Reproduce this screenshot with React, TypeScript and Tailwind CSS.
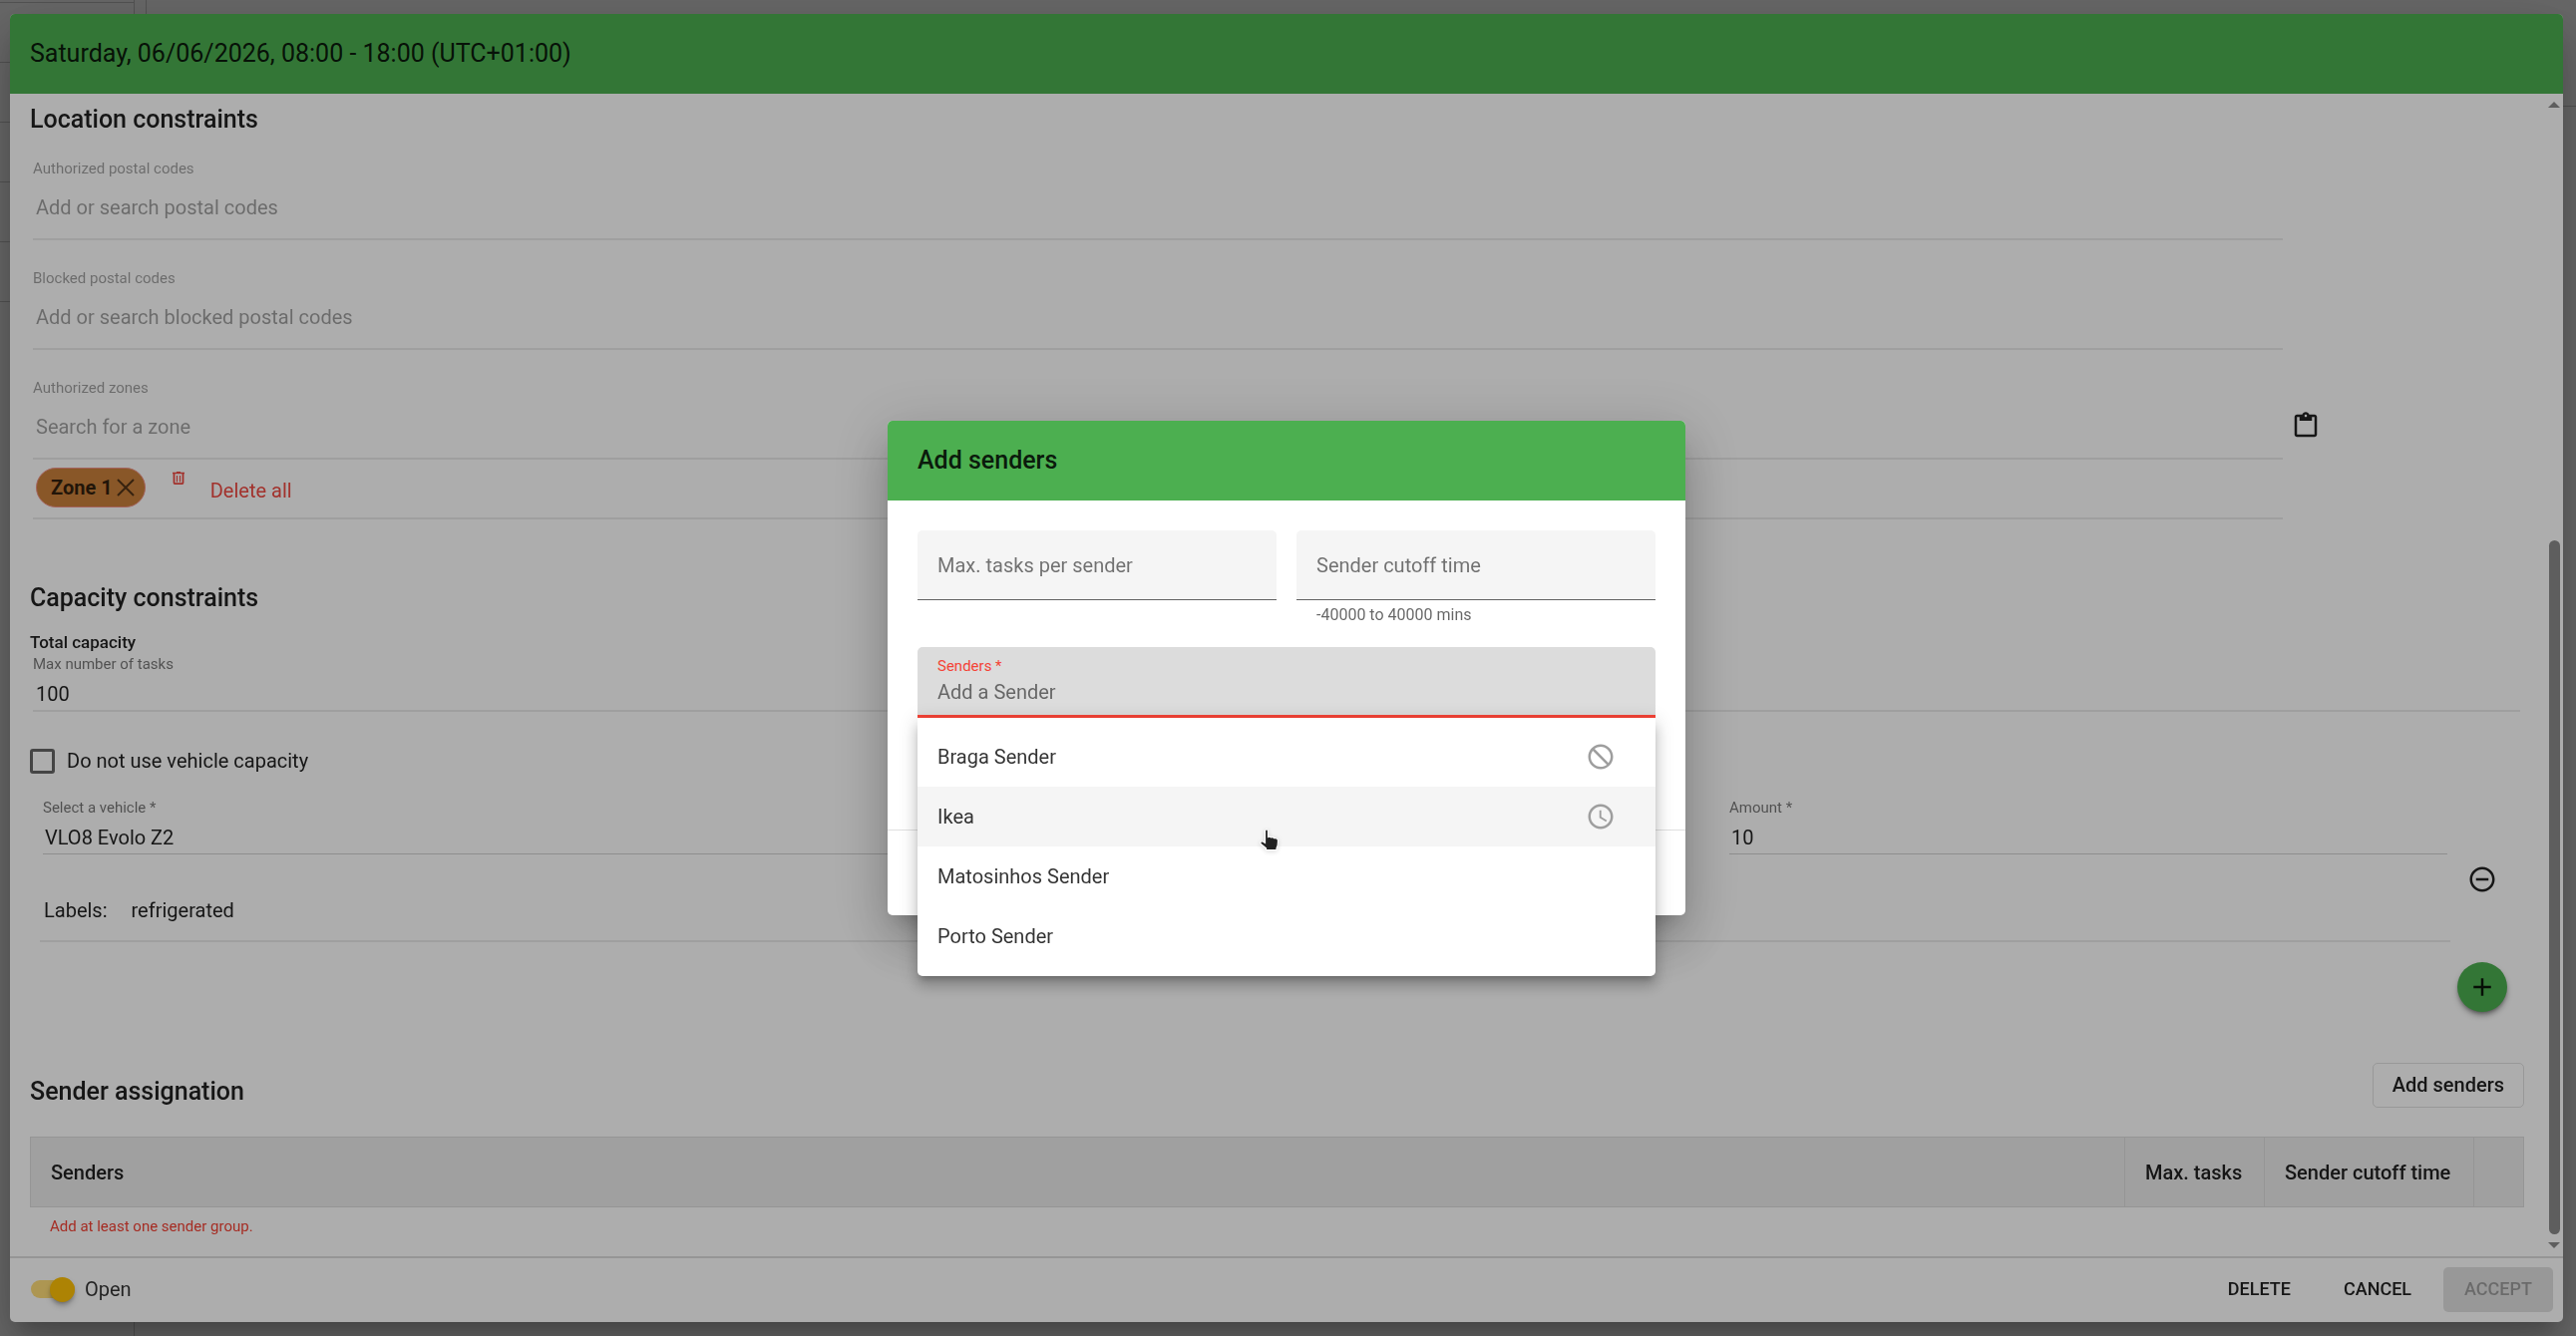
import React from "react";
import { MdAccessTime, MdAdd, MdBlock, MdRemoveCircleOutline } from "react-icons/md";

const senders = [
  { name: "Braga Sender", icon: <MdBlock size={30} className="-scale-x-100" /> },
  { name: "Ikea", icon: <MdAccessTime size={30} />, active: true },
  { name: "Matosinhos Sender" },
  { name: "Porto Sender" },
];

function PasteIcon() {
  return (
    <svg viewBox="0 0 24 24" className="size-[30px]" fill="currentColor" aria-hidden="true">
      <path d="M19 3h-4.18C14.4 1.84 13.3 1 12 1s-2.4.84-2.82 2H5c-1.1 0-2 .9-2 2v14c0 1.1.9 2 2 2h14c1.1 0 2-.9 2-2V5c0-1.1-.9-2-2-2zm-7 0c.55 0 1 .45 1 1s-.45 1-1 1-1-.45-1-1 .45-1 1-1zm7 16H5V5h2v3h10V5h2v14z" />
    </svg>
  );
}

function CloseIcon() {
  return (
    <svg viewBox="0 0 18 18" className="size-[18px]" fill="none" stroke="currentColor" strokeWidth="2" aria-hidden="true">
      <path d="M1 1l16 16M17 1L1 17" />
    </svg>
  );
}

function TrashIcon() {
  return (
    <svg viewBox="0 0 12 13" className="h-[13px] w-3" fill="none" stroke="currentColor" aria-hidden="true">
      <path d="M0 1.5h12M4 .5h4" strokeWidth="1.4" />
      <path d="M1.5 2v9c0 .8.4 1.200 1.200 1.200h6.600c.8 0 1.200-.4 1.200-1.200V2" strokeWidth="1.800" />
      <path d="M4.500 4v6.500M7.500 4v6.500" strokeWidth="1.200" />
    </svg>
  );
}

function Pointer() {
  return (
    <svg viewBox="0 0 20 24" className="h-6 w-5 drop-shadow-sm" aria-hidden="true">
      <path
        d="M5.500 2.500c0-2 3-2 3 0v6c1-.6 2.300-.4 3 .5 1.200-.6 2.400-.2 3 .7 2.300-.5 4 .6 4 3 0 3.500-.3 5-1.500 7v2H6.500v-2L1.200 15.500c-1-2 .6-3.200 2-2.500l2.300 1.500z"
        fill="#222"
        stroke="#fff"
        strokeWidth="1.200"
      />
    </svg>
  );
}

interface SearchFieldProps {
  id: string;
  label: string;
  placeholder: string;
}

function SearchField({ id, label, placeholder }: SearchFieldProps) {
  return (
    <div className="flex h-[110px] flex-col border-b-2 border-black/8 pt-7">
      <label htmlFor={id} className="text-[15px] leading-5 text-black/38">
        {label}
      </label>
      <input
        id={id}
        placeholder={placeholder}
        className="mt-[15px] h-7 w-full bg-transparent px-[3px] text-xl outline-none placeholder:text-black/38"
      />
    </div>
  );
}

function LocationSection() {
  return (
    <section className="mr-[242px]">
      <h2 className="pt-2.5 text-[25px] leading-8 font-medium">Location constraints</h2>
      <div className="-mt-[5px] ml-[3px]">
        <SearchField id="authorized" label="Authorized postal codes" placeholder="Add or search postal codes" />
        <SearchField id="blocked" label="Blocked postal codes" placeholder="Add or search blocked postal codes" />
        <div className="relative">
          <SearchField id="zones" label="Authorized zones" placeholder="Search for a zone" />
          <button aria-label="Paste zones" className="absolute top-[61px] -right-[38px]">
            <PasteIcon />
          </button>
        </div>
        <div className="flex h-[60px] items-start border-b-2 border-black/8 pt-2 pl-[3px]">
          <span className="flex h-10 items-center gap-1 rounded-full border border-[#f0938a] bg-[#ca813b] pr-2.5 pl-3.5 text-xl font-bold text-black/75">
            Zone 1
            <button aria-label="Remove Zone 1" className="text-black/60">
              <CloseIcon />
            </button>
          </span>
          <button className="flex items-start gap-[26px] pt-1 pl-[27px] text-[#ef4b43]">
            <TrashIcon />
            <span className="pt-[3px] text-xl leading-8">Delete all</span>
          </button>
        </div>
      </div>
    </section>
  );
}

function CapacitySection() {
  return (
    <section>
      <h2 className="pt-[63px] text-[25px] leading-8 font-medium">Capacity constraints</h2>
      <h3 className="pt-4 text-[17px] leading-6 font-medium">Total capacity</h3>
      <div className="mr-1 ml-[3px] flex flex-col border-b-2 border-black/8">
        <label htmlFor="max-tasks" className="text-[15px] leading-5 text-black/54">
          Max number of tasks
        </label>
        <input id="max-tasks" defaultValue="100" className="mt-1 h-8 bg-transparent px-[3px] text-xl outline-none" />
      </div>
      <label className="mt-[35px] flex items-center gap-3 text-xl leading-7">
        <input type="checkbox" className="size-[25px] appearance-none rounded-[3px] border-[3px] border-black/60" />
        Do not use vehicle capacity
      </label>

      <div className="flex">
        <div className="ml-2.5 flex-1 border-b-2 border-black/8 pb-4">
          <div className="mx-[3px] flex justify-between pt-[23px]">
            <div className="flex w-2/3 flex-col border-b border-black/18">
              <label htmlFor="vehicle" className="text-[15px] leading-5 text-black/54">
                Select a vehicle *
              </label>
              <select id="vehicle" className="mt-1 h-8 appearance-none bg-transparent px-0.5 text-xl outline-none">
                <option>VLO8 Evolo Z2</option>
              </select>
            </div>
            <div className="flex w-[720px] flex-col border-b border-black/18">
              <label htmlFor="amount" className="text-[15px] leading-5 text-black/54">
                Amount *
              </label>
              <input
                id="amount"
                defaultValue="10"
                className="mt-1 h-8 bg-transparent px-0.5 text-xl outline-none"
              />
            </div>
          </div>
          <p className="mt-[42px] ml-1 flex gap-6 text-xl leading-7">
            <span>Labels:</span>
            <span>refrigerated</span>
          </p>
        </div>
        <div className="flex w-[74px] flex-col items-center pt-[90px] pr-2.5">
          <button aria-label="Remove vehicle">
            <MdRemoveCircleOutline size={30} />
          </button>
        </div>
      </div>
      <div className="mt-5 mr-[17px] flex justify-end">
        <button
          aria-label="Add vehicle"
          className="flex size-[50px] items-center justify-center rounded-full bg-[#4caf50] shadow-md shadow-black/40"
        >
          <MdAdd size={30} />
        </button>
      </div>
    </section>
  );
}

function SenderSection() {
  return (
    <section>
      <div className="mt-[50px] flex items-center justify-between">
        <h2 className="pt-3.5 text-[25px] leading-8 font-medium">Sender assignation</h2>
        <button className="h-[45px] rounded-[5px] border border-black/12 px-[19px] text-xl font-medium">
          Add senders
        </button>
      </div>
      <table className="mt-[29px] w-full table-fixed border-collapse text-left text-xl">
        <thead>
          <tr className="h-[70px] bg-[#ececec]">
            <th className="border border-[#dcdcdc] px-5 font-medium">Senders</th>
            <th className="w-[140px] border border-[#dcdcdc] px-5 font-medium">Max. tasks</th>
            <th className="w-[210px] border border-[#dcdcdc] px-5 font-medium whitespace-nowrap">
              Sender cutoff time
            </th>
            <th className="w-[50px] border border-[#dcdcdc]" aria-label="Actions" />
          </tr>
        </thead>
      </table>
      <p className="mt-[9px] ml-5 text-[15px] leading-5 text-[#f44336]">Add at least one sender group.</p>
    </section>
  );
}

function ScrollBar() {
  return (
    <div className="flex w-[18px] shrink-0 flex-col items-center bg-white py-2 text-[#8b8b8b]">
      <svg viewBox="0 0 12 6" className="h-1.5 w-3 shrink-0" fill="currentColor" aria-hidden="true">
        <path d="M0 6h12L6 0z" />
      </svg>
      <div className="mt-auto mb-2 h-[60.5%] w-[11px] rounded-full bg-[#8b8b8b]" />
      <svg viewBox="0 0 12 6" className="h-1.5 w-3 shrink-0" fill="currentColor" aria-hidden="true">
        <path d="M0 0h12L6 6z" />
      </svg>
    </div>
  );
}

function FooterBar() {
  return (
    <footer className="flex h-[66px] shrink-0 items-center justify-between border-t-2 border-[#dcdcdc] pr-2.5 pb-0.5 pl-[21px]">
      <label className="flex items-center gap-2.5 text-xl text-black/80">
        <span className="relative flex h-[25px] w-[44px] items-center">
          <input
            type="checkbox"
            defaultChecked
            className="h-[18px] w-full appearance-none rounded-full bg-[#ffc107]/54"
          />
          <span className="absolute right-0 size-[25px] rounded-full bg-[#ffc107] shadow-md shadow-black/30" />
        </span>
        Open
      </label>
      <div className="flex gap-[11px] text-lg font-medium">
        <button className="h-[45px] px-[21px]">DELETE</button>
        <button className="h-[45px] px-[21px]">CANCEL</button>
        <button disabled className="h-[45px] rounded-[5px] bg-black/12 px-[21px] text-black/30">
          ACCEPT
        </button>
      </div>
    </footer>
  );
}

function AddSendersDialog() {
  return (
    <div role="dialog" aria-label="Add senders" className="w-[800px] rounded-[5px] bg-white shadow-[0_14px_19px_-9px_rgba(0,0,0,0.2),0_30px_48px_4px_rgba(0,0,0,0.14),0_11px_58px_10px_rgba(0,0,0,0.12)]">
      <header className="flex h-20 items-center rounded-t-[5px] bg-[#4caf50] px-[30px]">
        <h2 className="text-[25px] font-medium">Add senders</h2>
      </header>
      <div className="px-[30px] pt-[30px]">
        <div className="grid grid-cols-2 gap-5">
          <input
            aria-label="Max. tasks per sender"
            placeholder="Max. tasks per sender"
            className="h-[70px] rounded-t-[5px] border-b border-black/60 bg-[#f5f5f5] px-5 text-xl outline-none placeholder:text-black/54"
          />
          <div>
            <input
              aria-label="Sender cutoff time"
              placeholder="Sender cutoff time"
              className="h-[70px] w-full rounded-t-[5px] border-b border-black/60 bg-[#f5f5f5] px-5 text-xl outline-none placeholder:text-black/54"
            />
            <p className="mt-[5px] px-5 text-base leading-5 text-black/60">-40000 to 40000 mins</p>
          </div>
        </div>
        <div className="relative mt-[22px] h-[183px]">
          <div className="flex h-[71px] flex-col rounded-t-[5px] border-b-[3px] border-[#f44336] bg-[#dcdcdc] px-5 pt-[9px]">
            <label htmlFor="sender" className="text-[15px] leading-5 text-[#f44336]">
              Senders *
            </label>
            <input
              id="sender"
              placeholder="Add a Sender"
              className="mt-0.5 h-7 bg-transparent text-xl outline-none placeholder:text-black/54"
            />
          </div>
          <ul className="absolute inset-x-0 top-[71px] rounded-b-[5px] bg-white pt-[9px] pb-2.5 text-xl text-black/80 shadow-[0_6px_6px_-3px_rgba(0,0,0,0.2),0_10px_13px_1px_rgba(0,0,0,0.14),0_4px_18px_3px_rgba(0,0,0,0.12)]">
            {senders.map((sender) => (
              <li key={sender.name} className={`flex h-[60px] items-center justify-between pr-10 pl-5 ${sender.active ? "bg-[#f5f5f5]" : ""}`}>
                {sender.name}
                <span className="text-[#9e9e9e]">{sender.icon}</span>
              </li>
            ))}
          </ul>
          <span className="absolute top-[182px] left-[343px]">
            <Pointer />
          </span>
        </div>
      </div>
      <div className="h-[86px] border-t border-black/12" />
    </div>
  );
}

export default function App() {
  return (
    <div className="h-screen overflow-hidden bg-white font-['Roboto',sans-serif] text-black/87">
      {/* Calendar behind the dialogs */}
      <div className="flex h-full">
        <div className="w-[135px] border-r border-black/20">
          <div className="h-[3px] border-b border-black/20" />
          <div className="h-[60px] border-b border-black/20" />
          <div className="h-[60px] border-b border-black/20" />
          <div className="h-[60px] border-b border-black/20" />
          <div className="h-[60px] border-b border-black/20" />
          <div className="h-[60px] border-b border-black/20" />
        </div>
        <div className="h-12 w-3 border-r border-black/20" />
        <div className="flex-1">
          <div className="h-[107px] border-b border-black/20" />
        </div>
      </div>

      <div className="fixed inset-0 flex bg-black/40 py-3.5 pr-[13px] pl-2.5">
        <div role="dialog" aria-label="Edit slot" className="flex min-w-0 flex-1 flex-col overflow-hidden rounded-[5px] bg-white shadow-[0_14px_19px_-9px_rgba(0,0,0,0.2),0_30px_48px_4px_rgba(0,0,0,0.14),0_11px_58px_10px_rgba(0,0,0,0.12)]">
          <header className="flex h-20 shrink-0 items-center bg-[#4caf50] px-5">
            <h1 className="text-[25px]">Saturday, 06/06/2026, 08:00 - 18:00 (UTC+01:00)</h1>
          </header>
          <div className="flex min-h-0 flex-1">
            <div className="min-w-0 flex-1 overflow-hidden pr-[21px] pl-5">
              <LocationSection />
              <CapacitySection />
              <SenderSection />
            </div>
            <ScrollBar />
          </div>
          <FooterBar />
        </div>
      </div>

      <div className="fixed inset-0 flex items-center justify-center bg-black/32 pr-[13px] pl-2.5">
        <AddSendersDialog />
      </div>
    </div>
  );
}
